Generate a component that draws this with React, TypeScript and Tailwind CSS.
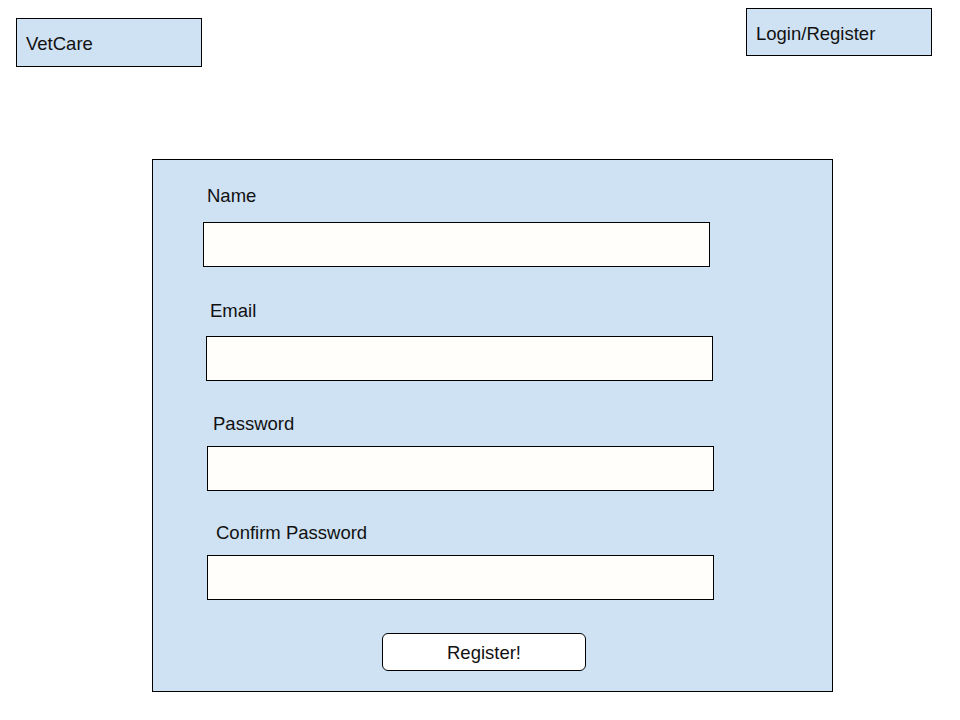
import React from "react";

const fields = [
  { label: "Name", labelClass: "mt-[25px] ml-[54px]", inputClass: "mt-4 ml-[50px]" },
  { label: "Email", labelClass: "mt-[33px] ml-[57px]", inputClass: "mt-[15px] ml-[53px]" },
  { label: "Password", labelClass: "mt-8 ml-[60px]", inputClass: "mt-3 ml-[54px]" },
  { label: "Confirm Password", labelClass: "mt-[31px] ml-[63px]", inputClass: "mt-3 ml-[54px]" },
];

export default function App() {
  return (
    <div className="w-[960px] h-[720px] bg-white font-['Liberation_Sans',Arial,sans-serif] text-[#111]">
      {/* Header */}
      <header className="flex items-start justify-between pl-4 pr-[28px]">
        <div className="mt-[18px] w-[186px] h-[49px] bg-[#cfe2f3] border border-black flex items-center pl-[9px] pt-[3px] text-[18.5px]">
          VetCare
        </div>
        <div className="mt-2 w-[186px] h-[48px] bg-[#cfe2f3] border border-black flex items-center pl-[9px] pt-[3px] text-[18.5px]">
          Login/Register
        </div>
      </header>

      {/* Register form */}
      <div className="ml-[152px] mt-[92px] w-[681px] h-[533px] bg-[#cfe2f3] border border-black flex flex-col">
        {fields.map((field) => (
          <div key={field.label} className="flex flex-col">
            <label className={`${field.labelClass} text-[18.5px] leading-[21px] h-[21px]`}>
              {field.label}
            </label>
            <div
              className={`${field.inputClass} w-[507px] h-[45px] bg-[#fffefb] border border-black`}
            />
          </div>
        ))}
        <div className="flex mt-[33px] ml-[229px]">
          <button className="w-[204px] h-[38px] bg-white border border-black rounded-[6px] text-[18.5px] pt-[1px]">
            Register!
          </button>
        </div>
      </div>
    </div>
  );
}
